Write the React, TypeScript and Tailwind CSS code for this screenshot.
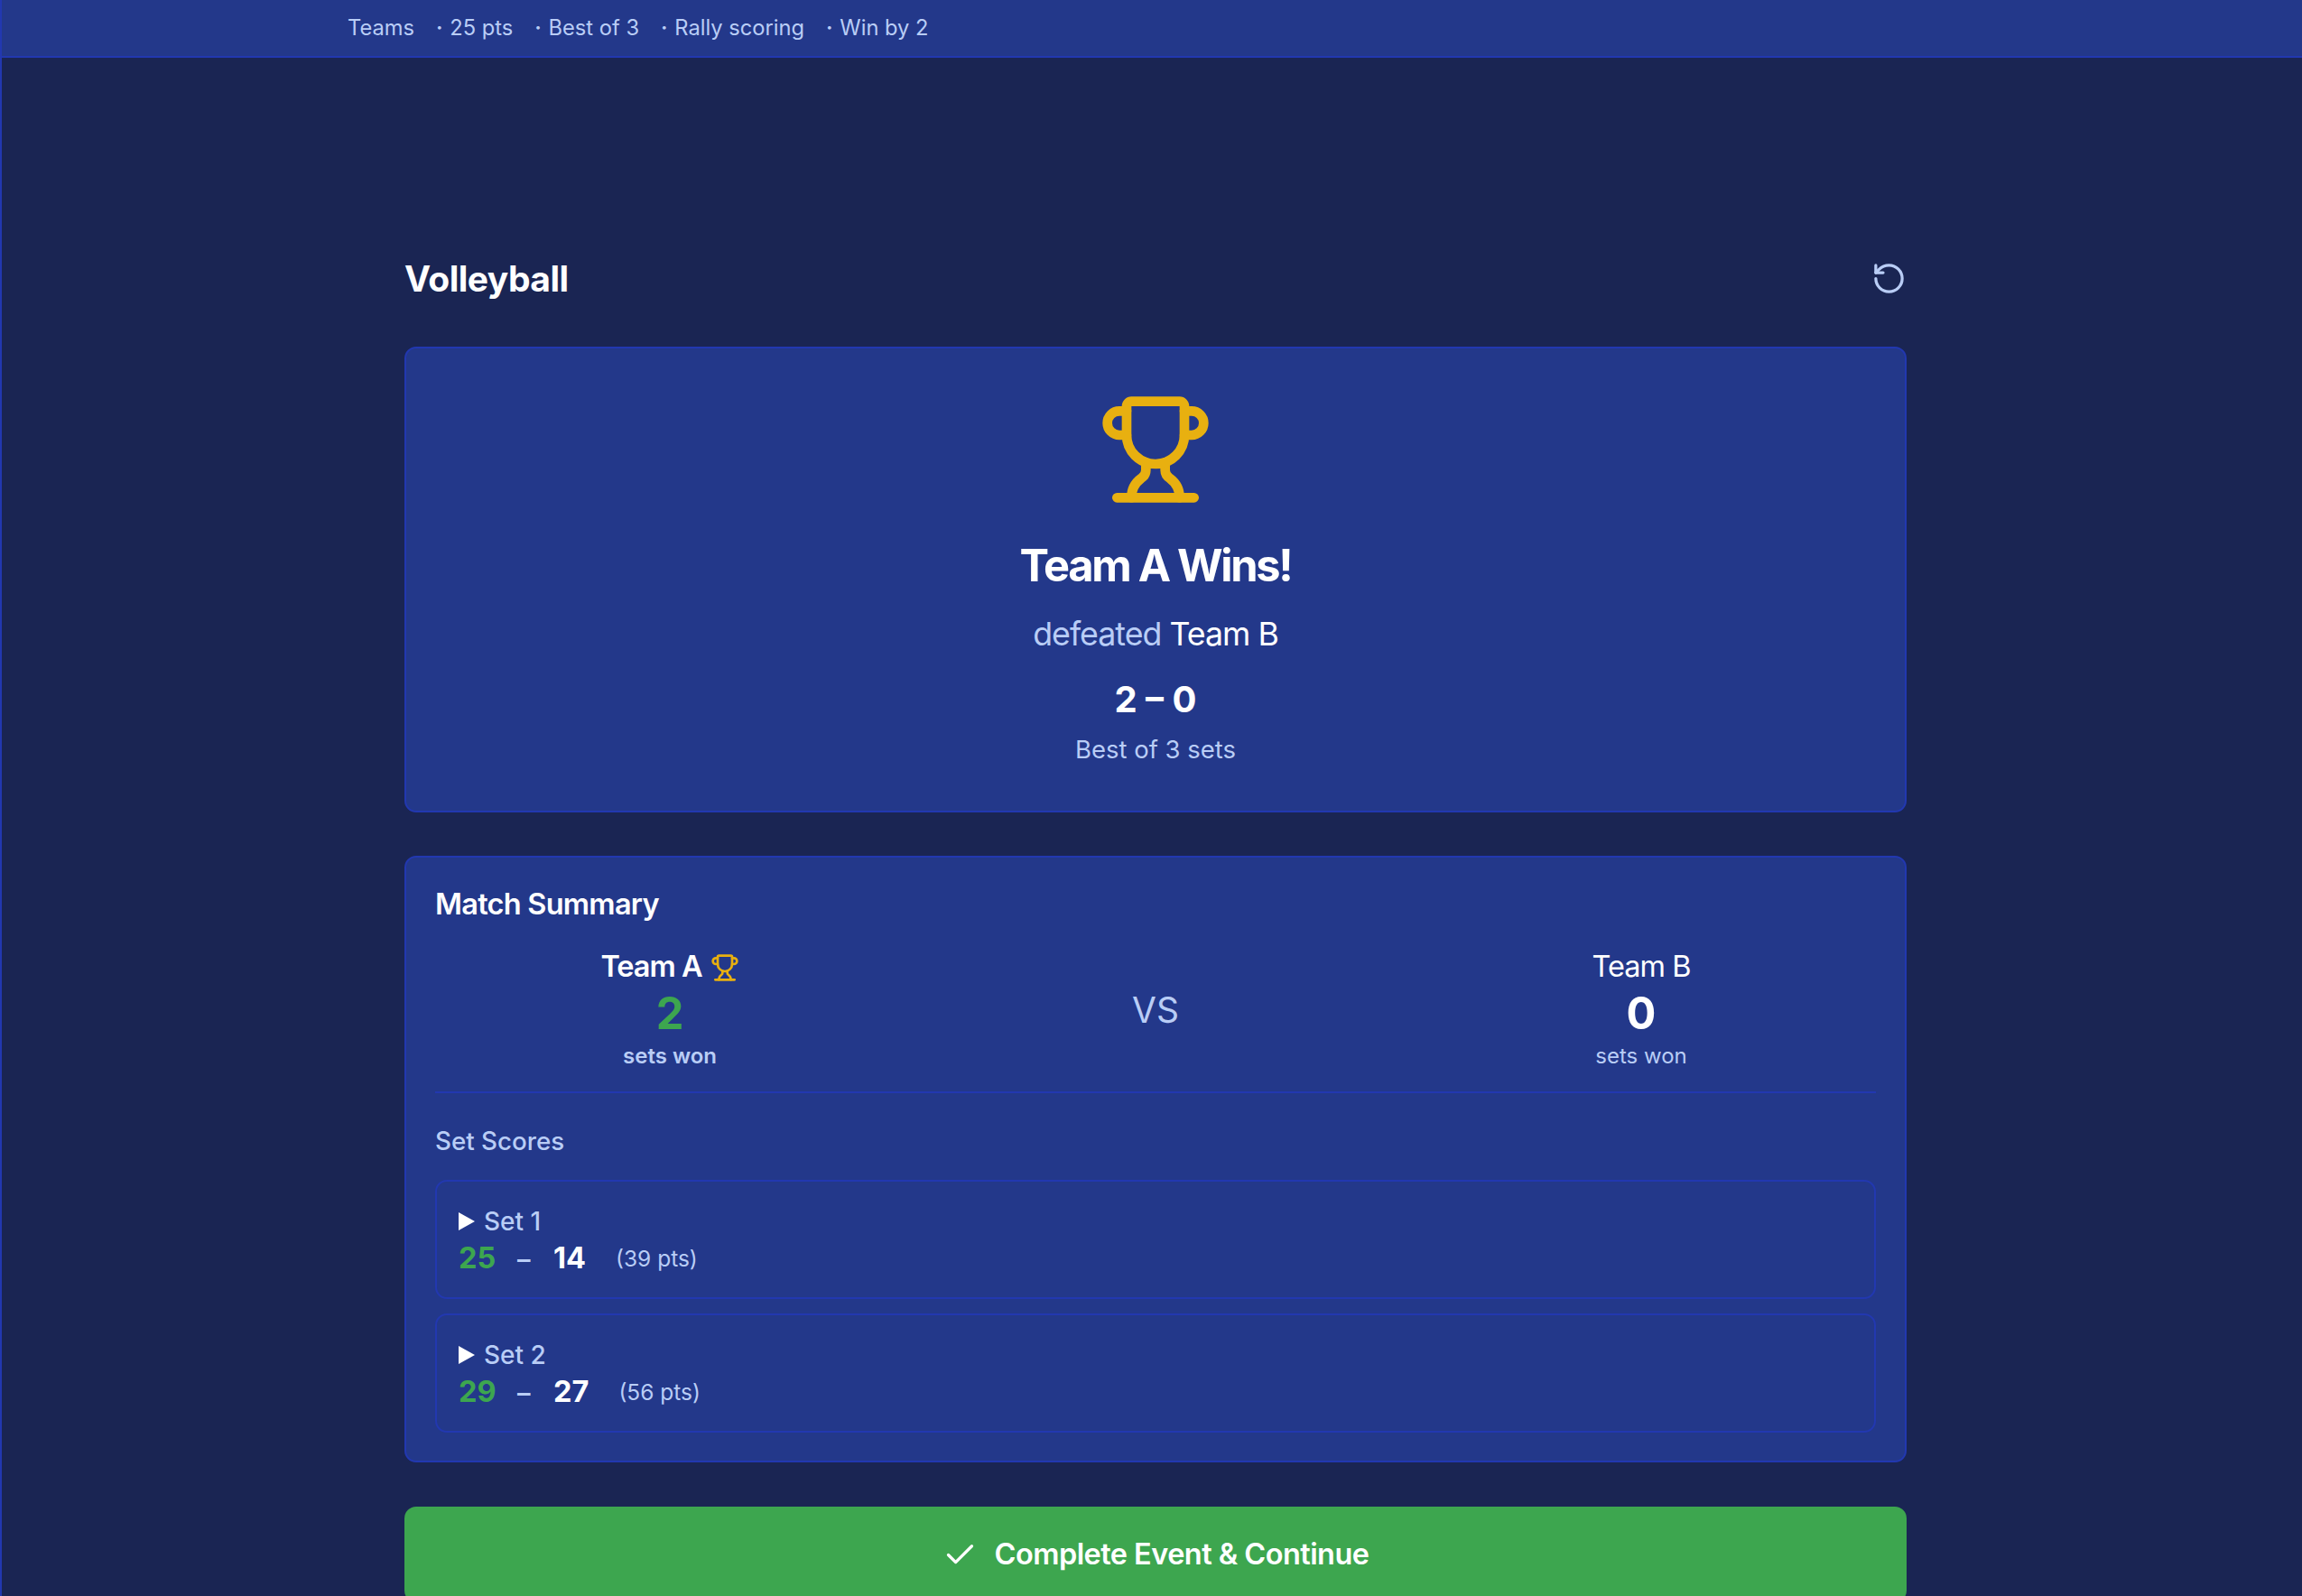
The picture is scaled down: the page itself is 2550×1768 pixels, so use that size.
import { Check, RotateCcw, Trophy } from 'lucide-react';

const font = { fontFamily: 'Inter, "Liberation Sans", sans-serif' };

const sets = [
  { name: 'Set 1', a: 25, b: 14, total: 39 },
  { name: 'Set 2', a: 29, b: 27, total: 56 },
];

const rules = ['25 pts', 'Best of 3', 'Rally scoring', 'Win by 2'];

function SetRow({ name, a, b, total }: { name: string; a: number; b: number; total: number }) {
  return (
    <div className="h-[132px] rounded-[13px] border-2 border-[#2238b0] px-[24px] pt-[26px]">
      <div className="flex h-[35px] items-center gap-[10px] text-[28px] font-medium text-[#b9cdf6]">
        <span className="h-0 w-0 border-y-[10.5px] border-l-[18px] border-y-transparent border-l-white" />
        <span>{name}</span>
      </div>
      <div className="mt-[5px] flex h-[39px] items-center">
        <span className="w-[42px] text-[32.5px] font-bold text-[#3da64f]">{a}</span>
        <span className="ml-[23px] w-[18px] text-[29px] font-semibold text-[#b9cdf6]">–</span>
        <span className="ml-[22px] text-[32.5px] font-bold text-white">{b}</span>
        <span className="ml-[33px] text-[24.5px] text-[#b9cdf6]">({total} pts)</span>
      </div>
    </div>
  );
}

export default function App() {
  return (
    <div style={font} className="h-screen overflow-hidden border-l-2 border-[#2238b0] bg-[#1a2553]">
      <header className="flex h-[64px] items-center gap-[24px] border-b-2 border-[#2238b0] bg-[#23388a] pl-[383px] text-[23.7px] text-[#b9cdf6]">
        <span>Teams</span>
        {rules.map(r => (
          <span key={r}>
            <span className="mr-[1px] font-semibold">·</span> {r}
          </span>
        ))}
      </header>

      <main className="ml-[446px] w-[1664px] pt-[216px]">
        <div className="flex h-[104px] items-start justify-between">
          <h1 className="text-[39px] leading-[58px] font-bold tracking-[-0.5px] text-white">Volleyball</h1>
          <RotateCcw size={39} className="mt-[9px] text-[#b9cdf6]" />
        </div>

        <section className="flex h-[516px] flex-col items-center rounded-[13px] border-2 border-[#2238b0] bg-[#23388a] pt-[48px]">
          <Trophy size={128} strokeWidth={2} className="text-[#e8b010]" />
          <h2 className="mt-[36px] text-[48.75px] leading-[58px] font-bold tracking-[-2.3px] text-white">Team A Wins!</h2>
          <p className="mt-[20px] text-[35.75px] leading-[52px] tracking-[-1px] text-[#b9cdf6]">
            defeated <span className="text-white">Team B</span>
          </p>
          <p className="mt-[21px] text-[40px] leading-[52px] font-bold text-white">2 – 0</p>
          <p className="mt-[10px] text-[27.5px] leading-[39px] text-[#b9cdf6]">Best of 3 sets</p>
        </section>

        <section className="mt-[48px] h-[672px] rounded-[13px] border-2 border-[#2238b0] bg-[#23388a] px-[32px] pt-[32px]">
          <h3 className="text-[32.5px] leading-[39px] font-semibold tracking-[-0.75px] text-white">Match Summary</h3>

          <div className="mt-[31px] grid grid-cols-3 gap-[18px] border-b-2 border-[#2238b0] pb-[23px]">
            <div className="flex flex-col items-center">
              <div className="flex h-[39px] items-center gap-[9px] text-[32.5px] font-semibold tracking-[-1px] text-white">
                Team A <Trophy size={32} className="text-[#e8b010]" />
              </div>
              <div className="mt-[3px] text-[48.75px] leading-[58px] font-bold text-[#3da64f]">2</div>
              <div className="mt-[2px] text-[24px] leading-[32px] font-semibold text-[#b9cdf6]">sets won</div>
            </div>
            <div className="flex items-center justify-center text-[39px] text-[#b9cdf6]">VS</div>
            <div className="flex flex-col items-center">
              <div className="flex h-[39px] items-center text-[32.5px] tracking-[-1px] text-white">Team B</div>
              <div className="mt-[3px] text-[48.75px] leading-[58px] font-bold text-white">0</div>
              <div className="mt-[2px] text-[24px] leading-[32px] text-[#b9cdf6]">sets won</div>
            </div>
          </div>

          <h4 className="mt-[34px] text-[27.75px] leading-[39px] font-medium text-[#b9cdf6]">Set Scores</h4>

          <div className="mt-[23px] flex flex-col gap-[16px]">
            {sets.map(s => (
              <SetRow key={s.name} {...s} />
            ))}
          </div>
        </section>

        <button className="mt-[49px] flex h-[106px] w-full items-center justify-center gap-[19px] rounded-[13px] bg-[#3da64f] text-[32.5px] font-semibold tracking-[-0.56px] text-white">
          <Check size={39} strokeWidth={2} />
          Complete Event &amp; Continue
        </button>
      </main>
    </div>
  );
}
